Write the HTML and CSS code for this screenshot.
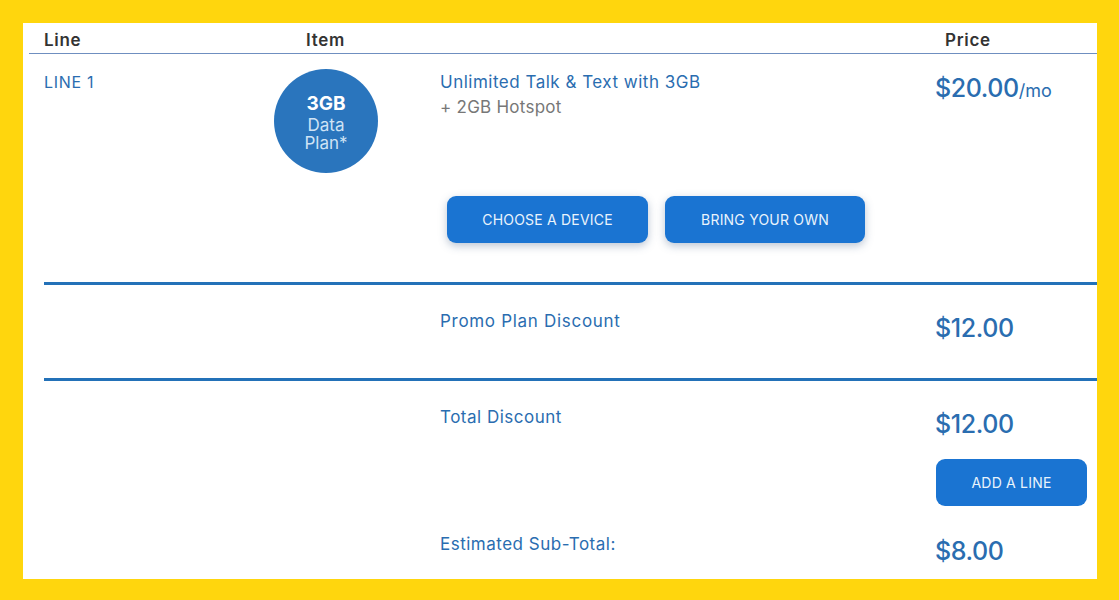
FILE: index.html
```html
<!DOCTYPE html>
<html lang="en">

<head>
      <meta charset="UTF-8">
      <meta name="viewport" content="width=device-width, initial-scale=1.0">
      <title>Cart</title>
      <link rel="stylesheet" href="styles.css">
</head>

<body>
      <div class="panel">
            <div class="head">
                  <div class="head-line">Line</div>
                  <div class="head-item">Item</div>
                  <div class="head-price">Price</div>
            </div>

            <div class="row row-plan">
                  <div class="line-name">LINE 1</div>
                  <div class="badge">
                        <strong>3GB</strong>
                        <span>Data</span>
                        <span>Plan*</span>
                  </div>
                  <div class="desc">
                        <div class="title">Unlimited Talk &amp; Text with 3GB</div>
                        <div class="sub">+ 2GB Hotspot</div>
                        <div class="actions">
                              <button class="btn btn-device">CHOOSE A DEVICE</button>
                              <button class="btn btn-own">BRING YOUR OWN</button>
                        </div>
                  </div>
                  <div class="price price-plan">$20.00<small>/mo</small></div>
            </div>

            <div class="row row-promo">
                  <div class="title title-cell title-promo">Promo Plan Discount</div>
                  <div class="price price-cell">$12.00</div>
            </div>

            <div class="row row-total">
                  <div class="title title-cell">Total Discount</div>
                  <div class="price-cell">
                        <div class="price">$12.00</div>
                        <button class="btn btn-add">ADD A LINE</button>
                  </div>
            </div>

            <div class="row-sub">
                  <div class="title title-cell">Estimated Sub-Total:</div>
                  <div class="price price-cell">$8.00</div>
            </div>
      </div>
</body>

</html>
```

FILE: styles.css
```css
body {
      margin: 0;
      height: 600px;
      padding: 23px 22px 21px 23px;
      box-sizing: border-box;
      background-color: #ffd60d;
      font-family: Inter, "Open Sans", sans-serif;
      overflow: hidden;
}

.panel {
      height: 100%;
      background-color: #fff;
      overflow: hidden;
}

.head {
      display: grid;
      grid-template-columns: 262px 639px 1fr;
      height: 30px;
      margin-left: 6px;
      padding-left: 15px;
      border-bottom: 1px solid #6f8fc0;
      font-size: 17px;
      letter-spacing: 0.7px;
      line-height: 34px;
      font-weight: 600;
      color: #333;
}

.row,
.row-sub {
      display: grid;
      grid-template-columns: 230px 167px 495px 1fr;
      margin-left: 21px;
}

.row {
      border-bottom: 3px solid #2371b8;
}

.row-plan {
      height: 228px;
}

.row-promo {
      height: 93px;
}

.row-total {
      border-bottom: none;
      height: 126px;
}

.line-name {
      padding-top: 18px;
      font-size: 16px;
      letter-spacing: 0.7px;
      line-height: 20px;
      color: #2a6db0;
}

.badge {
      width: 104px;
      height: 104px;
      margin-top: 15px;
      padding-top: 24px;
      box-sizing: border-box;
      border-radius: 50%;
      background-color: #2a75bd;
      color: #cfe3f5;
      text-align: center;
      font-size: 17px;
      line-height: 18px;
}

.badge strong {
      display: block;
      margin-bottom: 2px;
      font-size: 19px;
      line-height: 21px;
      font-weight: 700;
      color: #fff;
}

.badge span {
      display: block;
}

.desc {
      padding-top: 17px;
}

.title {
      margin-left: -1px;
      font-size: 17px;
      letter-spacing: 0.5px;
      line-height: 22px;
      color: #2a6db0;
}

.title-promo {
      letter-spacing: 0.7px;
}

.sub {
      margin-top: 3px;
      margin-left: -1px;
      font-size: 17px;
      letter-spacing: 0.25px;
      line-height: 22px;
      color: #777;
}

.actions {
      display: flex;
      gap: 17px;
      margin-top: 78px;
      margin-left: 6px;
}

.btn {
      height: 47px;
      padding: 0;
      border: none;
      border-radius: 9px;
      background-color: #1a74d2;
      color: #e9f3fc;
      font-family: inherit;
      font-size: 14px;
      letter-spacing: 0.2px;
      box-shadow: 0 3px 8px rgba(60, 90, 130, 0.35);
}

.btn-device {
      width: 201px;
}

.btn-own {
      width: 200px;
}

.btn-add {
      display: block;
      width: 151px;
      margin-top: 20px;
      box-shadow: none;
}

.price {
      margin-left: -1px;
      font-size: 25px;
      letter-spacing: -0.4px;
      line-height: 30px;
      font-weight: 500;
      color: #2a6db0;
}

.price small {
      font-size: 18px;
      letter-spacing: 0;
      font-weight: 400;
}

.price-plan {
      padding-top: 19px;
}

.title-cell {
      grid-column: 3;
      padding-top: 25px;
}

.price-cell {
      grid-column: 4;
      padding-top: 28px;
}

.row-sub .title-cell {
      padding-top: 26px;
}

.row-sub .price-cell {
      padding-top: 29px;
}
```
